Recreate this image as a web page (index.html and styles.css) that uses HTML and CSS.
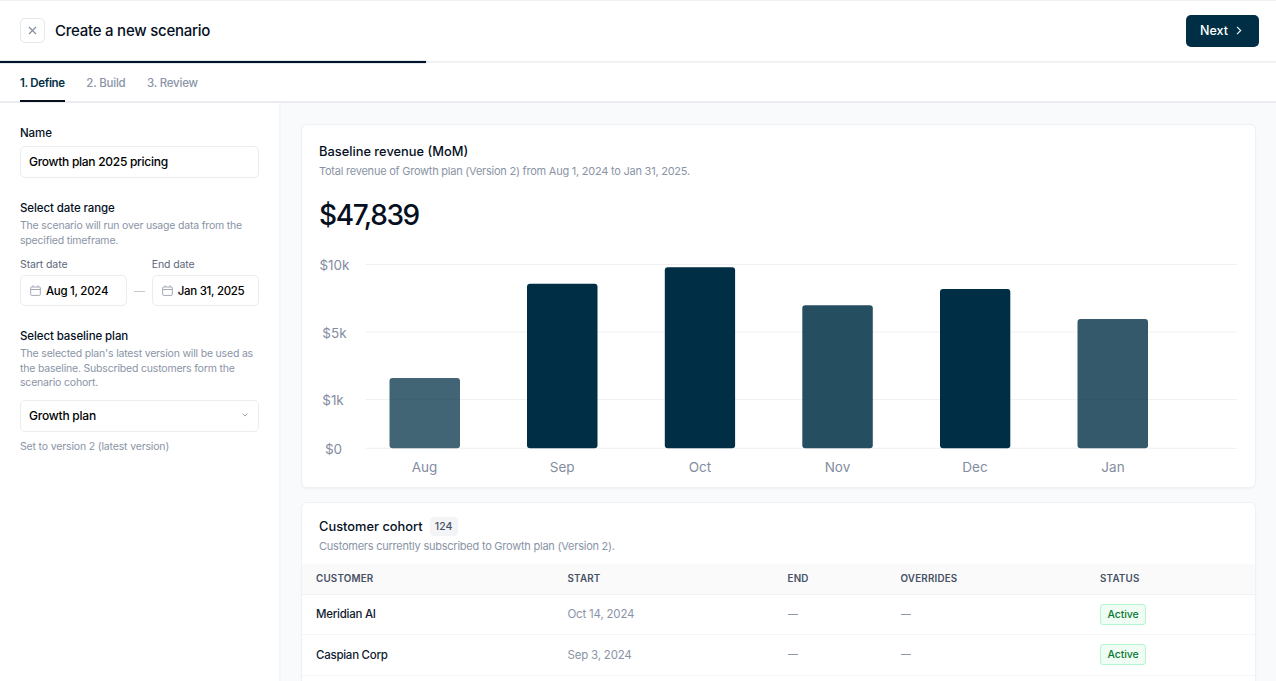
FILE: index.html
```html
<!DOCTYPE html>
<html lang="en">
<head>
  <meta charset="UTF-8" />
  <meta name="viewport" content="width=device-width, initial-scale=1.0"/>
  <title>Create a new scenario</title>
  <link rel="stylesheet" href="styles.css">
</head>
<body>

  <header class="topbar">
    <button class="close-btn" aria-label="Close">
      <svg width="9" height="9" viewBox="0 0 9 9"><path d="M1 1l7 7M8 1L1 8"/></svg>
    </button>
    <h1>Create a new scenario</h1>
    <button class="next-btn">
      <span>Next</span>
      <svg width="6" height="9" viewBox="0 0 6 9"><path d="M1 .9L4.7 4.5L1 8.1"/></svg>
    </button>
  </header>

  <div class="progress"><div class="progress-bar"></div></div>

  <nav class="tabs">
    <a class="tab active">1. Define</a>
    <a class="tab">2. Build</a>
    <a class="tab">3. Review</a>
  </nav>

  <div class="layout">

    <!-- Scenario form -->
    <aside class="sidebar">
      <section class="group">
        <h2 class="label">Name</h2>
        <div class="field field-name">Growth plan 2025 pricing</div>
      </section>

      <section class="group">
        <h2 class="label">Select date range</h2>
        <p class="help">The scenario will run over usage data from the<br>specified timeframe.</p>
        <div class="dates">
          <div class="date">
            <span class="date-label">Start date</span>
            <div class="field field-date">
              <svg class="calendar" width="11" height="11" viewBox="0 0 11 11"><path d="M1.5 2h8a.8.8 0 0 1 .8.8v6.6a1 1 0 0 1-1 1H1.7a1 1 0 0 1-1-1V2.8a.8.8 0 0 1 .8-.8zM.7 4.5h9.6M3 .3v1.7M8 .3v1.7"/></svg>
              <span>Aug 1, 2024</span>
            </div>
          </div>
          <span class="dash"></span>
          <div class="date">
            <span class="date-label">End date</span>
            <div class="field field-date">
              <svg class="calendar" width="11" height="11" viewBox="0 0 11 11"><path d="M1.5 2h8a.8.8 0 0 1 .8.8v6.6a1 1 0 0 1-1 1H1.7a1 1 0 0 1-1-1V2.8a.8.8 0 0 1 .8-.8zM.7 4.5h9.6M3 .3v1.7M8 .3v1.7"/></svg>
              <span>Jan 31, 2025</span>
            </div>
          </div>
        </div>
      </section>

      <section class="group">
        <h2 class="label">Select baseline plan</h2>
        <p class="help">The selected plan's latest version will be used as<br>the baseline. Subscribed customers form the<br>scenario cohort.</p>
        <div class="field field-select">
          <span>Growth plan</span>
          <svg class="chevron" width="6" height="4" viewBox="0 0 6 4"><path d="M.6.7L3 3.1L5.4.7"/></svg>
        </div>
        <p class="hint">Set to version 2 (latest version)</p>
      </section>
    </aside>

    <main class="content">

      <!-- Revenue chart -->
      <section class="card card-revenue">
        <h2 class="card-title">Baseline revenue (MoM)</h2>
        <p class="card-desc desc-revenue">Total revenue of Growth plan (Version 2) from Aug 1, 2024 to Jan 31, 2025.</p>
        <div class="total">$47,839</div>
        <svg class="chart" width="920" height="230" viewBox="318 252 920 230">
          <g class="grid">
            <path d="M365.5 264.5H1237M365.5 332H1237M365.5 399.5H1237M365.5 448.3H1237"/>
          </g>
          <g class="bars">
            <rect x="389.5" y="378" width="70.5" height="70.3" rx="3" opacity=".74"/>
            <rect x="527" y="283.7" width="70.5" height="164.6" rx="3"/>
            <rect x="664.8" y="267.3" width="70.3" height="181" rx="3"/>
            <rect x="802.3" y="305.3" width="70.5" height="143" rx="3" opacity=".85"/>
            <rect x="940" y="289" width="70.3" height="159.3" rx="3"/>
            <rect x="1077.5" y="319" width="70.5" height="129.3" rx="3" opacity=".8"/>
          </g>
          <g class="axis">
            <text x="334.5" y="270">$10k</text>
            <text x="334.5" y="337.6">$5k</text>
            <text x="333" y="405.3">$1k</text>
            <text x="333.5" y="453.6">$0</text>
            <text x="424.5" y="472.4">Aug</text>
            <text x="562.2" y="472.4">Sep</text>
            <text x="700" y="472.4">Oct</text>
            <text x="837.5" y="472.4">Nov</text>
            <text x="975" y="472.4">Dec</text>
            <text x="1113" y="472.4">Jan</text>
          </g>
        </svg>
      </section>

      <!-- Customer table -->
      <section class="card card-cohort">
        <div class="cohort-head">
          <h2 class="card-title">Customer cohort</h2>
          <span class="count">124</span>
        </div>
        <p class="card-desc desc-cohort">Customers currently subscribed to Growth plan (Version 2).</p>
        <table>
          <colgroup>
            <col class="col-customer"><col class="col-start"><col class="col-end"><col class="col-overrides"><col>
          </colgroup>
          <thead>
            <tr><th>CUSTOMER</th><th>START</th><th>END</th><th>OVERRIDES</th><th>STATUS</th></tr>
          </thead>
          <tbody>
            <tr>
              <td class="customer">Meridian AI</td><td>Oct 14, 2024</td><td><i class="none"></i></td><td><i class="none"></i></td>
              <td><span class="status">Active</span></td>
            </tr>
            <tr>
              <td class="customer">Caspian Corp</td><td>Sep 3, 2024</td><td><i class="none"></i></td><td><i class="none"></i></td>
              <td><span class="status">Active</span></td>
            </tr>
          </tbody>
        </table>
      </section>
    </main>
  </div>

</body>
</html>
```
FILE: styles.css
```css
/* === RESET & BASE === */
* { margin: 0; padding: 0; box-sizing: border-box; }

:root {
  --navy: #002f45;
  --text: #050f1e;
  --muted: #8a94a6;
  --line: #f0f1f2;
  --bg: #f9fafc;
}

body {
  height: 681px;
  overflow: hidden;
  display: flex;
  flex-direction: column;
  font-family: Inter, "Liberation Sans", sans-serif;
  font-size: 12px;
  color: var(--text);
  background: #fff;
  white-space: nowrap;
}

h1, h2 { font-weight: 500; }
svg { display: block; fill: none; flex-shrink: 0; }

/* === HEADER === */
.topbar {
  height: 61px;
  flex-shrink: 0;
  display: flex;
  align-items: center;
  padding: 0 17px 1px 20px;
  border-top: 1px solid #f2f2f2;
}

.close-btn {
  width: 25px;
  height: 25px;
  display: flex;
  align-items: center;
  justify-content: center;
  border: 1px solid #e5e7ea;
  border-radius: 5px;
  background: #fff;
}

.close-btn svg { stroke: #7e899b; stroke-width: 1.1; }

.topbar h1 {
  margin-left: 10px;
  font-size: 15px;
  letter-spacing: -0.24px;
}

.next-btn {
  width: 73px;
  height: 32px;
  margin-left: auto;
  display: flex;
  align-items: center;
  gap: 8px;
  padding-left: 14px;
  border: none;
  border-radius: 5px;
  background: var(--navy);
  color: #fff;
  font: 500 12.5px Inter, "Liberation Sans", sans-serif;
}

.next-btn svg { stroke: #fff; stroke-width: 1.1; }

.progress { height: 2px; flex-shrink: 0; background: #f1f2f3; }
.progress-bar {
  width: 426px;
  height: 2px;
  background: #00142b;
  box-shadow: 0 0 1px var(--navy);
}

/* === TABS === */
.tabs {
  height: 40px;
  flex-shrink: 0;
  display: flex;
  gap: 21.5px;
  padding-left: 20px;
  border-bottom: 2px solid #eaecef;
}

.tab {
  height: 39px;
  line-height: 40px;
  font-size: 11.5px;
  font-weight: 500;
  letter-spacing: -0.22px;
  color: var(--muted);
}

.tab.active {
  font-weight: 600;
  letter-spacing: -0.32px;
  color: var(--navy);
  border-bottom: 2px solid #08101d;
}

/* === LAYOUT === */
.layout { flex: 1; min-height: 0; display: flex; }

.sidebar {
  width: 281px;
  flex-shrink: 0;
  padding: 22px 20px 0;
  border-right: 2px solid #f4f5f6;
}

.content {
  flex: 1;
  min-height: 0;
  display: flex;
  flex-direction: column;
  gap: 14px;
  padding: 21px 21.5px 0 20px;
  background: var(--bg);
}

/* === FORM === */
.group { width: 238.5px; margin-bottom: 22px; }
.label { height: 16px; line-height: 17px; font-size: 11.5px; letter-spacing: -0.1px; }

.field {
  display: flex;
  align-items: center;
  height: 32px;
  padding: 0 8px;
  border: 1px solid #eaecef;
  border-radius: 5px;
  font-size: 12px;
  font-weight: 500;
  letter-spacing: -0.22px;
  color: #000;
}

.field-name { margin-top: 5px; padding-bottom: 2px; letter-spacing: -0.28px; }
.help { margin-top: 3px; font-size: 10.5px; line-height: 14.5px; letter-spacing: -0.19px; color: var(--muted); }

.dates { display: flex; margin-top: 10px; }
.date { width: 107px; }
.date-label { display: block; height: 14px; line-height: 14px; font-size: 10.5px; letter-spacing: -0.1px; color: #5d687c; }
.field-date { height: 31px; margin-top: 3px; padding-left: 9px; gap: 5px; font-size: 11.5px; letter-spacing: -0.3px; }
.calendar { stroke: #98a0ae; stroke-width: .9; }
.dash { width: 11px; height: 1px; margin: 33px 7px 0; background: #c4c9d2; }

.field-select { margin-top: 9px; padding-bottom: 1px; justify-content: space-between; }
.chevron { margin-right: 2px; stroke: #98a0ae; }
.hint { margin-top: 8px; font-size: 10.5px; line-height: 14px; letter-spacing: -0.16px; color: var(--muted); }

/* === CARDS === */
.card {
  background: #fff;
  border: 1px solid var(--line);
  border-radius: 6px;
  box-shadow: 0 1px 2px rgba(0,0,0,0.04);
}

.card-revenue { height: 364px; flex-shrink: 0; padding: 18px 17px 0; }
.card-title { height: 18px; line-height: 18px; font-size: 12.85px; }
.card-desc { height: 18px; line-height: 18px; font-size: 11px; letter-spacing: -0.235px; color: var(--muted); }
.desc-revenue { margin-top: 1px; }
.total { margin-top: 17px; height: 36px; line-height: 36px; font-size: 28px; font-weight: 500; letter-spacing: -1.4px; }
.chart { margin: 19px 0 0 -1px; }
.grid { stroke: #f0f1f3; }
.bars { fill: var(--navy); }
.axis { fill: #838da0; font-size: 13.5px; text-anchor: middle; }

.card-cohort {
  flex: 1;
  min-height: 0;
  overflow: hidden;
  border-bottom: none;
  border-radius: 6px 6px 0 0;
}

.cohort-head { display: flex; align-items: center; gap: 7px; height: 20px; margin: 13px 17px 0; }
.cohort-head .card-title { line-height: 19px; }
.count {
  width: 28px;
  height: 19px;
  line-height: 19px;
  text-align: center;
  font-size: 10.5px;
  font-weight: 500;
  color: #465164;
  background: #f3f4f6;
  border-radius: 4px;
}
.desc-cohort { margin: 1px 17px 0; }

/* === TABLE === */
table { width: 100%; margin-top: 9px; table-layout: fixed; border-collapse: collapse; text-align: left; }
.col-customer { width: 251.5px; }
.col-start { width: 220px; }
.col-end { width: 113px; }
.col-overrides { width: 199.5px; }
th {
  height: 30px;
  padding-left: 14px;
  font-size: 9.8px;
  font-weight: 600;
  letter-spacing: 0.2px;
  color: #465164;
  background: #fafafa;
  border-bottom: 1px solid #f1f2f3;
}
td {
  height: 40.5px;
  padding-left: 14px;
  font-size: 11.5px;
  letter-spacing: -0.2px;
  color: var(--muted);
  border-bottom: 1px solid #f5f5f6;
}
.customer { font-weight: 500; letter-spacing: -0.26px; color: #101b30; }
.none { display: block; width: 10px; height: 1px; background: #8f98a8; }
.status {
  display: block;
  width: 46px;
  height: 21px;
  line-height: 19px;
  text-align: center;
  font-size: 10.5px;
  font-weight: 500;
  letter-spacing: -0.1px;
  color: #087a31;
  background: #f0fdf5;
  border: 1px solid #b5f5cf;
  border-radius: 3px;
}
```
